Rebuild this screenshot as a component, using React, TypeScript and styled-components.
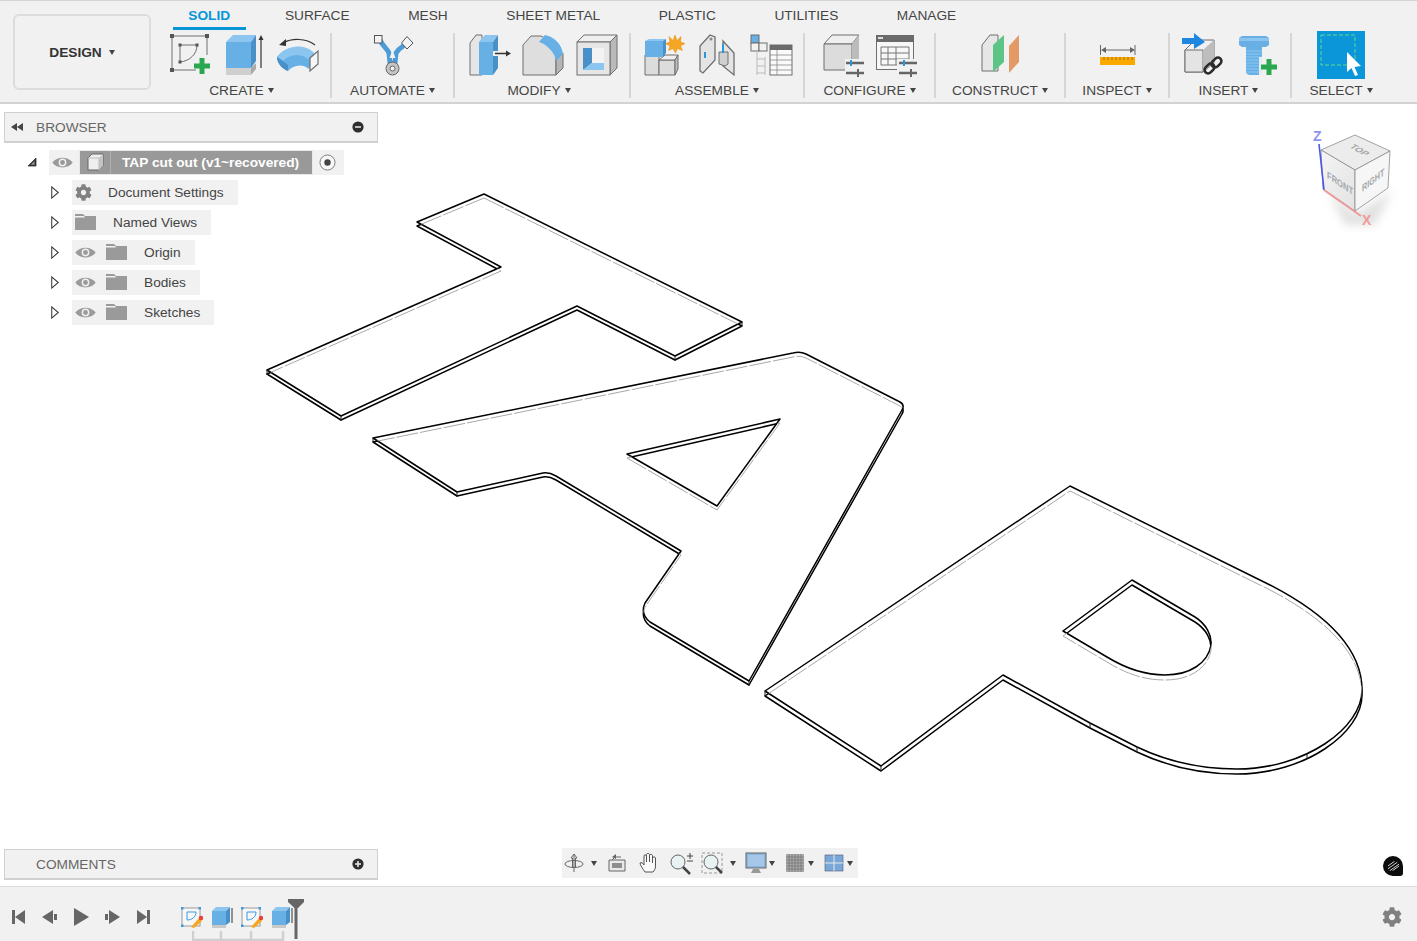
import React from "react";
import styled, { createGlobalStyle } from "styled-components";
import { FaCog } from "react-icons/fa";

const GlobalStyle = createGlobalStyle`
  html, body {
    margin: 0;
    padding: 0;
    background: #fff;
    font-family: "Liberation Sans", Arial, sans-serif;
  }
`;

const Page = styled.div`
  width: 1417px;
  height: 941px;
  display: flex;
  flex-direction: column;
  overflow: hidden;
  color: #444;
  font-size: 13.7px;
`;

/* ---------- toolbar ---------- */

const Toolbar = styled.div`
  height: 101px;
  flex: none;
  display: flex;
  background: #f1f1f1;
  border-top: 1px solid #d4d4d4;
  border-bottom: 2px solid #d2d2d2;
  padding-left: 13px;
`;

const DesignButton = styled.div`
  flex: none;
  width: 134px;
  height: 72px;
  margin: 13px 10px 0 0;
  border: 2px solid #dcdcdc;
  border-radius: 6px;
  display: flex;
  align-items: center;
  justify-content: center;
  gap: 7px;
  font-weight: 700;
  color: #333;
`;

const Caret = styled.span<{ $gap?: number }>`
  display: inline-block;
  flex: none;
  width: 0;
  height: 0;
  margin-left: ${(p) => p.$gap ?? 0}px;
  border-left: 3.5px solid transparent;
  border-right: 3.5px solid transparent;
  border-top: 5px solid #444;
`;

const ToolbarBody = styled.div`
  flex: 1;
  display: flex;
  flex-direction: column;
`;

const Tabs = styled.div`
  height: 29px;
  display: flex;
  margin-left: -2px;
`;

const Tab = styled.div<{ $active?: boolean }>`
  position: relative;
  padding: 0 ${(p) => (p.$active ? "25.5px" : "29.3px")} 0 29.3px;
  line-height: 29px;
  color: ${(p) => (p.$active ? "#0696d7" : "#444")};
  font-weight: ${(p) => (p.$active ? 700 : 400)};

  ${(p) =>
    p.$active &&
    `&::after {
      content: "";
      position: absolute;
      left: 14px;
      right: 10px;
      bottom: 0;
      height: 3px;
      background: #0696d7;
    }`}
`;

const Groups = styled.div`
  display: flex;
  margin-top: 3px;
`;

const Group = styled.div<{ $w: number; $last?: boolean; $pad?: number }>`
  width: ${(p) => p.$w}px;
  height: 65px;
  box-sizing: border-box;
  padding-right: ${(p) => p.$pad ?? 0}px;
  flex: none;
  display: flex;
  flex-direction: column;
  align-items: center;
  border-right: ${(p) => (p.$last ? "none" : "2px solid #d6d6d6")};
`;

const IconRow = styled.div`
  height: 44px;
  display: flex;
  align-items: center;
  gap: 6px;
`;

const GroupLabel = styled.div<{ $shift?: number }>`
  margin-top: 5px;
  margin-right: ${(p) => p.$shift ?? 0}px;
  line-height: 17px;
  display: flex;
  align-items: center;
  gap: 4px;
  white-space: nowrap;
`;

const ToolIcon = styled.svg`
  width: 48px;
  height: 44px;
  flex: none;
  overflow: visible;
`;

const SelectIcon = styled.svg`
  width: 48px;
  height: 48px;
  flex: none;
  margin-top: -1px;
`;

const blue = "#66b0e6";
const blueDark = "#4a90c8";
const blueLight = "#8cc6f0";
const grayLine = "#6e6e6e";
const green = "#2aa84f";

const GreenPlus = ({ x, y, r = 8 }: { x: number; y: number; r?: number }) => (
  <path d={`M${x - r} ${y}H${x + r}M${x} ${y - r}V${y + r}`} stroke={green} strokeWidth={r * 0.62} />
);

const SketchIcon = () => (
  <ToolIcon viewBox="0 0 48 44">
    <path d="M6 3H41M6 3V37H30M41 3V22" fill="none" stroke={grayLine} strokeWidth="1" />
    <path d="M14 29V12H31C31 21 24 28 14 29Z" fill="none" stroke={grayLine} strokeWidth="1" />
    <g fill="#555">
      <rect x="4" y="1" width="4" height="4" />
      <rect x="39" y="1" width="4" height="4" />
      <rect x="4" y="35" width="4" height="4" />
      <rect x="12.5" y="10.5" width="3" height="3" />
      <rect x="29.5" y="10.5" width="3" height="3" />
      <rect x="12.5" y="27.5" width="3" height="3" />
    </g>
    <GreenPlus x={36} y={33} />
  </ToolIcon>
);

const ExtrudeIcon = () => (
  <ToolIcon viewBox="0 0 48 44">
    <path d="M6 35H31V42H6Z" fill="#cfcfcf" />
    <path d="M31 35L36 30V36L31 42Z" fill="#a9a9a9" />
    <path d="M6 9H31V35H6Z" fill={blue} />
    <path d="M6 9L13 2H36L31 9Z" fill={blueLight} />
    <path d="M31 9L36 2V28L31 35Z" fill={blueDark} />
    <path d="M41 35V6" stroke="#333" strokeWidth="1.2" />
    <path d="M38.5 7L41 2L43.5 7Z" fill="#333" />
  </ToolIcon>
);

const RevolveIcon = () => (
  <ToolIcon viewBox="0 0 48 44">
    <path d="M41 12C32 5 18 5 9 10" fill="none" stroke="#333" strokeWidth="1.2" />
    <path d="M5 12L12 6V13Z" fill="#333" />
    <path d="M3 24C3 30 8 36 14 38C19 32 28 30 35 36L40 20C30 10 12 13 3 24Z" fill={blue} />
    <path d="M3 24C12 12 30 10 40 20L34 26C26 20 16 21 9 28Z" fill={blueLight} />
    <path d="M3 24L9 28L14 32V38C8 36 3 30 3 24Z" fill={blueDark} />
    <path d="M36 25L44 18V31L36 38Z" fill="#f6f6f6" stroke={grayLine} strokeWidth="1.2" />
  </ToolIcon>
);

const AutomateIcon = () => (
  <ToolIcon viewBox="0 0 48 44">
    <path d="M11 7C14 14 18 15 20 20L21 30H26L27 20C30 15 33 14 37 11" fill="none" stroke="#4d9cd8" strokeWidth="5" />
    <path d="M23.5 17L20.5 25H26.5Z" fill="#f1f1f1" />
    <rect x="5.5" y="2.5" width="7.5" height="7.5" fill="#f3f3f3" stroke="#555" />
    <path d="M38 3.5L44 10L38 16L32.5 10Z" fill="#f3f3f3" stroke="#555" />
    <circle cx="23.5" cy="35.5" r="6.5" fill="#c5c5c5" stroke="#666" />
    <circle cx="23.5" cy="35.5" r="2.5" fill="#f1f1f1" stroke="#666" />
  </ToolIcon>
);

const PressPullIcon = () => (
  <ToolIcon viewBox="0 0 48 44">
    <path d="M6 42V10L12 2H18V42Z" fill="#e6e6e6" stroke={grayLine} />
    <path d="M15 9L21 2H34L29 9Z" fill={blueLight} />
    <path d="M15 9H29V42H15Z" fill={blue} />
    <path d="M29 9L34 2V35L29 42Z" fill={blueDark} />
    <rect x="29" y="18" width="7" height="5" fill="#f1f1f1" />
    <path d="M31 20.5H43" stroke="#333" strokeWidth="1.5" />
    <path d="M42 17.5L47 20.5L42 23.5Z" fill="#333" />
  </ToolIcon>
);

const FilletIcon = () => (
  <ToolIcon viewBox="0 0 48 44">
    <path d="M5 42V12L13 3H23C34 8 38 15 38 30V42Z" fill="#dedede" stroke={grayLine} />
    <path d="M38 27L45 20V35L38 42Z" fill="#b5b5b5" stroke={grayLine} />
    <path d="M21 9L27 2C37 4 44 12 45 21L38 28C37 20 30 12 21 9Z" fill={blue} />
  </ToolIcon>
);

const ShellIcon = () => (
  <ToolIcon viewBox="0 0 48 44">
    <path d="M5 9L12 2H45L38 9Z" fill="#efefef" stroke={grayLine} />
    <path d="M38 9L45 2V35L38 42Z" fill="#b9b9b9" stroke={grayLine} />
    <rect x="5" y="9" width="33" height="33" fill="#e6e6e6" stroke={grayLine} />
    <rect x="11" y="15" width="21" height="22" fill="#f3f3f3" />
    <path d="M11 15H20V30L11 37Z" fill={blueDark} />
    <path d="M20 30H32V37H11Z" fill={blueLight} />
  </ToolIcon>
);

const NewComponentIcon = () => (
  <ToolIcon viewBox="0 0 48 44">
    <path d="M6 22H20V42H6Z" fill="#dcdcdc" stroke={grayLine} />
    <path d="M20 27H36V42H20Z" fill="#dcdcdc" stroke={grayLine} />
    <path d="M20 27L26 22H39L36 27Z" fill="#eee" stroke={grayLine} />
    <path d="M36 27L39 22V36L36 42Z" fill="#bdbdbd" stroke={grayLine} />
    <path d="M6 8H24V24H6Z" fill={blue} />
    <path d="M6 8L10 6H27L24 8Z" fill={blueLight} />
    <path d="M24 8L27 6V20L24 24Z" fill={blueDark} />
    <path
      d="M36 2L38 7.5L42 3.5L41.5 9L46 10.5L41.5 13L43.5 17.5L38.5 15.5L36.5 20L34 15.5L29.5 17.5L31 13L26.5 10.5L31 9L30 3.5L34 7.5Z"
      fill="#f5a623"
      stroke="#e08a00"
      strokeWidth=".5"
    />
  </ToolIcon>
);

const JointIcon = () => (
  <ToolIcon viewBox="0 0 48 44">
    <path d="M7 38V13L17 2L22 4V27L10 40Z" fill="#e4e4e4" stroke={grayLine} strokeWidth="1.3" />
    <path d="M30 8L41 20V42L30 33Z" fill="#e4e4e4" stroke={grayLine} strokeWidth="1.3" />
    <path d="M26 19H35V31L32 33L26 31Z" fill="#cfcfcf" stroke={grayLine} />
    <circle cx="18" cy="6" r="1.5" fill="#888" />
    <path d="M12 19V25M30 11V20" stroke="#2d95dc" strokeWidth="2" />
  </ToolIcon>
);

const TableTreeIcon = () => (
  <ToolIcon viewBox="0 0 48 44">
    <rect x="4" y="2" width="8" height="8" fill={blue} stroke={grayLine} />
    <rect x="4" y="10" width="8" height="8" fill="#f1f1f1" stroke={grayLine} />
    <rect x="12" y="10" width="8" height="8" fill="#f1f1f1" stroke={grayLine} />
    <path d="M10 18V42M18 24V42M10 26H18M10 33H18M10 40H18" stroke="#bbb" strokeWidth="1" fill="none" />
    <rect x="23" y="12" width="22" height="30" fill="#fafafa" stroke={grayLine} />
    <rect x="23" y="12" width="22" height="5" fill="#6a6a6a" />
    <path d="M23 22H45M23 27H45M23 32H45M23 37H45M30 17V42" stroke="#888" strokeWidth=".8" />
  </ToolIcon>
);

const Sliders = ({ x, y }: { x: number; y: number }) => (
  <g>
    <path d={`M${x} ${y}H${x + 18}M${x} ${y + 10}H${x + 18}`} stroke="#666" strokeWidth="2.4" />
    <path d={`M${x + 5} ${y - 3}V${y + 3}`} stroke="#2d95dc" strokeWidth="2" />
    <path d={`M${x + 12} ${y + 6}V${y + 14}`} stroke="#666" strokeWidth="2" />
  </g>
);

const ConfigureIcon = () => (
  <ToolIcon viewBox="0 0 48 44">
    <path d="M5 11L13 2H40L33 11Z" fill="#efefef" stroke={grayLine} />
    <path d="M5 11H33V37H5Z" fill="#dcdcdc" stroke={grayLine} />
    <path d="M33 11L40 2V29L33 37Z" fill="#bcbcbc" />
    <rect x="26" y="26" width="21" height="18" fill="#f1f1f1" />
    <Sliders x={27} y={30} />
  </ToolIcon>
);

const ParamTableIcon = () => (
  <ToolIcon viewBox="0 0 48 44">
    <rect x="3.5" y="2.5" width="37" height="34" fill="#f7f7f7" stroke={grayLine} />
    <rect x="3" y="2" width="38" height="7" fill="#6a6a6a" />
    <rect x="5" y="4" width="5" height="2" fill="#ddd" />
    <path d="M8 14H36V32H8ZM8 20H36M8 26H36M15 14V32M23 14V32" fill="none" stroke="#777" />
    <rect x="24" y="26" width="23" height="18" fill="#f1f1f1" />
    <Sliders x={26} y={30} />
  </ToolIcon>
);

const ConstructIcon = () => (
  <ToolIcon viewBox="0 0 48 44">
    <path d="M6 38V12L14 2H22V38Z" fill="#e6e6e6" stroke={grayLine} />
    <path d="M17 39V12L28 2V29Z" fill="#5cc585" />
    <path d="M33 40V13L43 2V29Z" fill="#e49a66" />
  </ToolIcon>
);

const InspectIcon = () => (
  <ToolIcon viewBox="0 0 48 44">
    <path d="M7.5 12V22M42 12V22" stroke="#666" />
    <path d="M10 17H40" stroke="#666" />
    <path d="M13 14L8 17L13 20ZM37 14L42 17L37 20Z" fill="#666" />
    <rect x="7" y="24" width="35" height="8" fill="#f9a900" />
    <path d="M11 24V27M15 24V27M19 24V27M23 24V27M27 24V27M31 24V27M35 24V27M39 24V27" stroke="#a87200" />
  </ToolIcon>
);

const DeriveIcon = () => (
  <ToolIcon viewBox="0 0 48 44">
    <path d="M6 17L16 7H35V30L24 39H6Z" fill="#f1f1f1" stroke={grayLine} />
    <path d="M6 17H24V39H6Z" fill="#e4e4e4" stroke={grayLine} />
    <path d="M24 17L35 7V30L24 39Z" fill="#bdbdbd" />
    <path d="M3 5H15V0L26 9L15 16V11H3Z" fill="#1e88e0" />
    <g fill="none" stroke="#2b2b2b" strokeWidth="2.6">
      <rect x="25" y="32" width="11" height="7" rx="3.5" transform="rotate(-45 30.5 35.5)" />
      <rect x="32" y="26" width="11" height="7" rx="3.5" transform="rotate(-45 37.5 29.5)" />
    </g>
  </ToolIcon>
);

const BoltIcon = () => (
  <ToolIcon viewBox="0 0 48 44">
    <path d="M6 5L9 3H33L36 5V12L33 14H9L6 12Z" fill="#6aaee6" />
    <path d="M6 5H36V8H6Z" fill={blueLight} />
    <path d="M13 14H29V40L26 42H16L13 40Z" fill={blue} />
    <path
      d="M13 18H29M13 21H29M13 24H29M13 27H29M13 30H29M13 33H29M13 36H29M13 39H29"
      stroke={blueLight}
    />
    <rect x="26" y="24" width="19" height="19" fill="#f1f1f1" opacity=".9" />
    <GreenPlus x={36} y={34} />
  </ToolIcon>
);

const SelectToolIcon = () => (
  <SelectIcon viewBox="0 0 48 48">
    <rect width="48" height="48" fill="#0a96d8" />
    <rect x="4" y="4" width="34" height="30" fill="none" stroke="#5fdc8c" strokeWidth="1" strokeDasharray="4 2" />
    <path d="M30 21L44 35L37.5 36L41 44L38 45L34.5 37L30 41Z" fill="#fff" />
  </SelectIcon>
);

/* ---------- canvas ---------- */

const Canvas = styled.div`
  flex: 1;
  position: relative;
  background: #fff;
`;

const Drawing = styled.svg`
  position: absolute;
  inset: 0;
  width: 1417px;
  height: 782px;
`;

const letters = [
  {
    id: "t",
    d: "M484 194L742 322L675 356L577 306L341 416L267 370L501 267L417 222Z",
    drop: 4,
  },
  {
    id: "a",
    d: "M373 438L793 353Q800 351 806 354L900 402Q905 405 902 410L749 681L650 622Q640 614 645 603L681 551L556 476Q549 472 543 473L457 492ZM627 454L717 506L780 419Z",
    drop: 4,
  },
  {
    id: "p",
    d: "M1070 486L1270 585C1328 615 1362 650 1362 690C1362 728 1305 769 1237 769C1195 769 1160 758 1137 747L1090 723L1003 675L881 766L765 691ZM1132 580L1195 617C1206 624 1212 635 1211 645C1208 663 1190 675 1165 675C1143 675 1125 668 1107 657L1063 631Z",
    drop: 5,
  },
];

const TapModel = () => (
  <Drawing viewBox="0 104 1417 782">
    <defs>
      {letters.map((l) => (
        <clipPath id={`clip-${l.id}`} key={l.id}>
          <path d={l.d} clipRule="evenodd" />
        </clipPath>
      ))}
    </defs>
    {letters.map((l) => (
      <g key={l.id}>
        <path
          d={l.d}
          transform={`translate(0 ${l.drop})`}
          fill="none"
          stroke="#000"
          strokeWidth="1.5"
          strokeLinejoin="round"
        />
        <path d={l.d} fillRule="evenodd" fill="#fff" stroke="#000" strokeWidth="1.5" strokeLinejoin="round" />
        <g clipPath={`url(#clip-${l.id})`}>
          <path
            d={l.d}
            transform={`translate(0 ${l.drop})`}
            fill="none"
            stroke="#a8a8a8"
            strokeWidth="1"
            strokeDasharray="22 2"
          />
        </g>
      </g>
    ))}
    <path
      d="M267 370V375M341 416V421M675 356V361M742 322V326M373 438V442M457 492V497M749 681V686M881 766V771M765 691V696M1090 723V728M1137 747V752M1307 754V759"
      stroke="#222"
      strokeWidth="1"
    />
  </Drawing>
);

const CubeBox = styled.svg`
  position: absolute;
  top: 21px;
  right: 7px;
  width: 110px;
  height: 110px;
`;

const cubeText = {
  fontFamily: '"Liberation Sans", Arial, sans-serif',
  fontWeight: 700,
  fill: "#a4a7aa",
} as const;

const ViewCube = () => (
  <CubeBox viewBox="1300 125 110 110">
    <defs>
      <filter id="cube-shadow" x="-30%" y="-30%" width="160%" height="160%">
        <feGaussianBlur stdDeviation="5" />
      </filter>
      <linearGradient id="cube-left" x1="0" y1="0" x2="1" y2="1">
        <stop offset="0" stopColor="#f4f4f4" />
        <stop offset="1" stopColor="#e3e3e3" />
      </linearGradient>
    </defs>
    <path d="M1328 190L1356 214L1392 190L1375 225L1345 225Z" fill="#bbb" opacity=".45" filter="url(#cube-shadow)" />
    <path d="M1355 135L1390 151L1355 170L1321 150Z" fill="#ececec" stroke="#8b8b8b" strokeWidth=".8" />
    <path d="M1321 150L1355 170V211L1323 189Z" fill="url(#cube-left)" stroke="#8b8b8b" strokeWidth=".8" />
    <path d="M1355 170L1390 151L1388 188L1355 211Z" fill="#f6f6f6" stroke="#8b8b8b" strokeWidth=".8" />
    <text {...cubeText} fontSize="10" transform="matrix(.78 .45 -.78 .45 1349 147)">TOP</text>
    <text {...cubeText} fontSize="10" transform="matrix(.76 .5 0 1 1327 178)">FRONT</text>
    <text {...cubeText} fontSize="10" transform="matrix(.72 -.55 0 1 1362 192)">RIGHT</text>
    <path d="M1319 144L1324 190" stroke="#4a55e8" strokeWidth="1.6" />
    <path d="M1324 190L1361 216" stroke="#ef9a9a" strokeWidth="2" />
    <text x="1313" y="141" fontSize="14" fontWeight="700" fill="#8f94f0" fontFamily='"Liberation Sans", sans-serif'>Z</text>
    <text x="1362" y="225" fontSize="14" fontWeight="700" fill="#f09a9a" fontFamily='"Liberation Sans", sans-serif'>X</text>
  </CubeBox>
);

/* ---------- browser ---------- */

const SidePanel = styled.div`
  position: absolute;
  left: 4px;
  top: 8px;
  width: 374px;
`;

const CommentsPanel = styled.div`
  position: absolute;
  left: 4px;
  bottom: 6px;
  width: 374px;
`;

const PanelHeader = styled.div`
  height: 31px;
  box-sizing: border-box;
  background: #f1f1f1;
  border: 1px solid #d0d0d0;
  border-bottom-width: 2px;
  display: flex;
  align-items: center;
  padding-left: 5px;
  padding-right: 13px;
  color: #666;
`;

const PanelTitle = styled.span<{ $indent: number }>`
  flex: 1;
  margin-left: ${(p) => p.$indent}px;
`;

const MiniSvg = styled.svg<{ $w?: number; $h?: number }>`
  width: ${(p) => p.$w ?? 14}px;
  height: ${(p) => p.$h ?? 14}px;
  flex: none;
`;

const RoundGlyph = ({ plus }: { plus?: boolean }) => (
  <MiniSvg viewBox="0 0 12 12" $w={12} $h={12}>
    <circle cx="6" cy="6" r="5.6" fill="#2e2e2e" />
    <path d={plus ? "M3 6H9M6 3V9" : "M3 6H9"} stroke="#eee" strokeWidth="1.5" />
  </MiniSvg>
);

const Tree = styled.div`
  margin-top: 4px;
`;

const Row = styled.div<{ $indent: number }>`
  height: 30px;
  display: flex;
  align-items: center;
  padding-left: ${(p) => p.$indent}px;
`;

const Toggle = styled.div`
  width: 24px;
  box-sizing: border-box;
  flex: none;
  display: flex;
  padding-left: 1.5px;
`;

const Chip = styled.div`
  height: 25px;
  display: flex;
  align-items: center;
  background: #f1f1f1;
`;

const IconCell = styled.div<{ $w: number }>`
  width: ${(p) => p.$w}px;
  height: 100%;
  flex: none;
  display: flex;
  align-items: center;
  justify-content: center;
  box-sizing: border-box;
`;

const RootEyeCell = styled(IconCell)`
  padding-right: 5px;
`;

const RadioCell = styled(IconCell)`
  padding-right: 2px;
`;

const Selected = styled.div`
  width: 232px;
  height: 23px;
  display: flex;
  align-items: center;
  background: #999;
  color: #fff;
  font-weight: 700;
  box-shadow: 0 0 0 1px #e8e8e8;
`;

const CubeCell = styled(IconCell)`
  border-right: 1px solid #b0b0b0;
`;

const Label = styled.span<{ $pad: number }>`
  padding: 0 14px 0 ${(p) => p.$pad}px;
  white-space: nowrap;
`;

const SelectedLabel = styled.span`
  padding-left: 11px;
  white-space: nowrap;
`;

const Eye = () => (
  <MiniSvg viewBox="0 0 22 14" $w={21} $h={13}>
    <path d="M0 7C5 0 17 0 22 7C17 14 5 14 0 7Z" fill="#9a9a9a" />
    <circle cx="11" cy="7" r="4.2" fill="#efefef" />
    <circle cx="11" cy="7" r="2.6" fill="#9a9a9a" />
  </MiniSvg>
);

const Folder = () => (
  <MiniSvg viewBox="0 0 21 16" $w={21} $h={16}>
    <path d="M0 0H8L10 2H21V16H0Z" fill="#9a9a9a" />
    <path d="M0 2H9L10 3.5H0Z" fill="#f1f1f1" />
  </MiniSvg>
);

const Expand = () => (
  <MiniSvg viewBox="0 0 10 14" $w={10} $h={13}>
    <path d="M1.5 1L8.5 7L1.5 13Z" fill="#fff" stroke="#333" strokeWidth="1.1" />
  </MiniSvg>
);

const Collapse = () => (
  <MiniSvg viewBox="0 0 10 10" $w={10} $h={10}>
    <path d="M9 1V9H1Z" fill="#333" stroke="#333" strokeWidth=".8" />
    <path d="M7.5 4V7.7H3.8Z" fill="#9b9b9b" />
  </MiniSvg>
);

const Radio = () => (
  <MiniSvg viewBox="0 0 18 18" $w={17} $h={17}>
    <circle cx="9" cy="9" r="8" fill="#f8f8f8" stroke="#777" />
    <circle cx="9" cy="9" r="3.4" fill="#444" />
  </MiniSvg>
);

const ComponentCube = () => (
  <MiniSvg viewBox="0 0 18 18" $w={18} $h={18}>
    <path d="M2 5L6 1H17V13L13 17H2Z" fill="#eee" stroke="#666" strokeLinejoin="round" />
    <path d="M13 5L17 1V13L13 17Z" fill="#c4c4c4" />
    <path d="M2 5H13V17" fill="none" stroke="#bbb" />
  </MiniSvg>
);

const Gear = styled(FaCog)`
  color: #808080;
  font-size: 17px;
`;

const TimelineGear = styled(FaCog)`
  color: #808080;
  font-size: 20px;
  margin-left: auto;
`;

const items: { name: string; eye?: boolean; icon: "gear" | "folder"; cell: number; pad: number }[] = [
  { name: "Document Settings", icon: "gear", cell: 22, pad: 14 },
  { name: "Named Views", icon: "folder", cell: 26, pad: 15 },
  { name: "Origin", eye: true, icon: "folder", cell: 36, pad: 10 },
  { name: "Bodies", eye: true, icon: "folder", cell: 36, pad: 10 },
  { name: "Sketches", eye: true, icon: "folder", cell: 36, pad: 10 },
];

/* ---------- navigation bar ---------- */

const NavBar = styled.div`
  position: absolute;
  left: 562px;
  bottom: 8px;
  width: 296px;
  height: 30px;
  background: #f1f1f1;
  display: flex;
  align-items: center;
  gap: 8px;
`;

const NavItem = styled.div`
  display: flex;
  align-items: center;
`;

const NavIcon = styled.svg`
  width: 24px;
  height: 24px;
  flex: none;
`;

const Badge = styled.div`
  position: absolute;
  left: 1383px;
  bottom: 10px;
  width: 20px;
  height: 20px;
  border-radius: 50%;
  border-bottom-right-radius: 3px;
  background: #0c0c0c;
  display: flex;
  align-items: center;
  justify-content: center;
`;

/* ---------- timeline ---------- */

const Timeline = styled.div`
  height: 49px;
  flex: none;
  background: #f1f1f1;
  border-top: 1px solid #dcdcdc;
  padding: 5px 15px 0 9px;
  display: flex;
  align-items: center;
`;

const Controls = styled.div`
  display: flex;
  align-items: center;
  gap: 11px;
`;

const ControlIcon = styled.svg`
  width: 20px;
  height: 20px;
  fill: #666;
`;

const Steps = styled.div`
  position: relative;
  margin-left: 26px;
  display: flex;
  gap: 6px;
`;

const StepIcon = styled.svg`
  width: 24px;
  height: 24px;
`;

const Bracket = styled.svg`
  position: absolute;
  left: 13px;
  top: 26px;
  width: 94px;
  height: 12px;
`;

const Marker = styled.svg`
  position: absolute;
  left: 109px;
  top: -6px;
  width: 16px;
  height: 40px;
`;

const SketchStep = () => (
  <StepIcon viewBox="0 0 24 24">
    <rect x="3" y="3" width="18" height="18" fill="#f7f7f7" stroke="#9a9a9a" />
    <g fill="#3b99e0">
      <rect x="2" y="2" width="2.5" height="2.5" />
      <rect x="19.5" y="2" width="2.5" height="2.5" />
      <rect x="2" y="19.5" width="2.5" height="2.5" />
    </g>
    <path d="M8 15V7H17C17 12 13 15 8 15Z" fill="none" stroke="#3b99e0" />
    <path d="M12 22L20 13L23 16L15 23Z" fill="#f5a623" />
    <circle cx="22" cy="13" r="2.2" fill="#e8403a" />
  </StepIcon>
);

const ExtrudeStep = () => (
  <StepIcon viewBox="0 0 24 24">
    <path d="M3 20H17V23H3Z" fill="#c9c9c9" />
    <path d="M3 6H17V20H3Z" fill={blue} />
    <path d="M3 6L7 2H21L17 6Z" fill={blueLight} />
    <path d="M17 6L21 2V17L17 20Z" fill={blueDark} />
    <path d="M23 18V3" stroke="#333" />
  </StepIcon>
);

const App: React.FC = () => (
  <Page>
    <GlobalStyle />
    <Toolbar>
      <DesignButton>
        DESIGN <Caret />
      </DesignButton>
      <ToolbarBody>
        <Tabs>
          <Tab $active>SOLID</Tab>
          <Tab>SURFACE</Tab>
          <Tab>MESH</Tab>
          <Tab>SHEET METAL</Tab>
          <Tab>PLASTIC</Tab>
          <Tab>UTILITIES</Tab>
          <Tab>MANAGE</Tab>
        </Tabs>
        <Groups>
          <Group $w={171} $pad={4}>
            <IconRow>
              <SketchIcon />
              <ExtrudeIcon />
              <RevolveIcon />
            </IconRow>
            <GroupLabel $shift={4}>
              CREATE <Caret />
            </GroupLabel>
          </Group>
          <Group $w={123}>
            <IconRow>
              <AutomateIcon />
            </IconRow>
            <GroupLabel>
              AUTOMATE <Caret />
            </GroupLabel>
          </Group>
          <Group $w={176}>
            <IconRow>
              <PressPullIcon />
              <FilletIcon />
              <ShellIcon />
            </IconRow>
            <GroupLabel $shift={6}>
              MODIFY <Caret />
            </GroupLabel>
          </Group>
          <Group $w={174}>
            <IconRow>
              <NewComponentIcon />
              <JointIcon />
              <TableTreeIcon />
            </IconRow>
            <GroupLabel>
              ASSEMBLE <Caret />
            </GroupLabel>
          </Group>
          <Group $w={131}>
            <IconRow>
              <ConfigureIcon />
              <ParamTableIcon />
            </IconRow>
            <GroupLabel>
              CONFIGURE <Caret />
            </GroupLabel>
          </Group>
          <Group $w={130}>
            <IconRow>
              <ConstructIcon />
            </IconRow>
            <GroupLabel>
              CONSTRUCT <Caret />
            </GroupLabel>
          </Group>
          <Group $w={104}>
            <IconRow>
              <InspectIcon />
            </IconRow>
            <GroupLabel>
              INSPECT <Caret />
            </GroupLabel>
          </Group>
          <Group $w={122}>
            <IconRow>
              <DeriveIcon />
              <BoltIcon />
            </IconRow>
            <GroupLabel $shift={3}>
              INSERT <Caret />
            </GroupLabel>
          </Group>
          <Group $w={98} $last>
            <IconRow>
              <SelectToolIcon />
            </IconRow>
            <GroupLabel>
              SELECT <Caret />
            </GroupLabel>
          </Group>
        </Groups>
      </ToolbarBody>
    </Toolbar>

    <Canvas>
      <TapModel />
      <ViewCube />

      <SidePanel>
        <PanelHeader>
          <MiniSvg viewBox="0 0 14 10" $w={14} $h={10}>
            <path d="M7 1L1 5L7 9ZM13 1L7 5L13 9Z" fill="#444" />
          </MiniSvg>
          <PanelTitle $indent={12}>BROWSER</PanelTitle>
          <RoundGlyph />
        </PanelHeader>
        <Tree>
          <Row $indent={21}>
            <Toggle>
              <Collapse />
            </Toggle>
            <Chip>
              <RootEyeCell $w={31}>
                <Eye />
              </RootEyeCell>
              <Selected>
                <CubeCell $w={31}>
                  <ComponentCube />
                </CubeCell>
                <SelectedLabel>TAP cut out (v1~recovered)</SelectedLabel>
              </Selected>
              <RadioCell $w={32}>
                <Radio />
              </RadioCell>
            </Chip>
          </Row>
          {items.map((item) => (
            <Row $indent={44} key={item.name}>
              <Toggle>
                <Expand />
              </Toggle>
              <Chip>
                {item.eye && (
                  <IconCell $w={26}>
                    <Eye />
                  </IconCell>
                )}
                <IconCell $w={item.cell}>{item.icon === "gear" ? <Gear /> : <Folder />}</IconCell>
                <Label $pad={item.pad}>{item.name}</Label>
              </Chip>
            </Row>
          ))}
        </Tree>
      </SidePanel>

      <CommentsPanel>
        <PanelHeader>
          <PanelTitle $indent={26}>COMMENTS</PanelTitle>
          <RoundGlyph plus />
        </PanelHeader>
      </CommentsPanel>

      <NavBar>
        <NavItem>
          <NavIcon viewBox="0 0 24 24" fill="none" stroke="#666">
            <path d="M12 3V21M12 3L9 7H10.5V17M12 3L15 7H13.5V17" />
            <ellipse cx="12" cy="13" rx="9" ry="3.5" />
          </NavIcon>
          <Caret $gap={5} />
        </NavItem>
        <NavItem>
          <NavIcon viewBox="0 0 24 24">
            <path d="M4 9H20V20H4Z" fill="#e9e9e9" stroke="#666" />
            <path d="M7 12H17V17H7Z" fill="#8e8e8e" />
            <path d="M7 9L10 6H16" fill="none" stroke="#666" />
            <path d="M7 6L11 3V8Z" fill="#666" />
          </NavIcon>
        </NavItem>
        <NavItem>
          <NavIcon viewBox="0 0 24 24">
            <path
              d="M8 21C6 18 3 14 3 12C4 11 6 12 7 14V5C7 3.5 9 3.5 9.5 5V11V3.5C10 2 12 2 12.5 3.5V11V4.5C13 3 15 3 15.5 4.5V12V7C16 5.5 18 5.5 18.5 7V15C18.5 18 17 20 16 21Z"
              fill="#fafafa"
              stroke="#555"
            />
          </NavIcon>
        </NavItem>
        <NavItem>
          <NavIcon viewBox="0 0 24 24">
            <circle cx="9" cy="11" r="7" fill="#e8f2f2" stroke="#666" />
            <path d="M14 16L21 23" stroke="#444" strokeWidth="2.5" />
            <path d="M18 5H24M21 2V8M18 10H24" stroke="#444" strokeWidth="1" />
          </NavIcon>
        </NavItem>
        <NavItem>
          <NavIcon viewBox="0 0 24 24">
            <rect x="1" y="2" width="20" height="20" fill="none" stroke="#999" strokeDasharray="3 2" />
            <circle cx="10" cy="11" r="7" fill="#e8f2f2" stroke="#666" />
            <path d="M15 16L21 22" stroke="#444" strokeWidth="2.5" />
          </NavIcon>
          <Caret $gap={5} />
        </NavItem>
        <NavItem>
          <NavIcon viewBox="0 0 24 24">
            <rect x="2" y="2" width="20" height="15" fill="#8db8de" stroke="#666" />
            <rect x="4" y="4" width="16" height="11" fill="#a5c8e8" />
            <path d="M9 18H15L17 22H7Z" fill="#999" />
          </NavIcon>
          <Caret $gap={1} />
        </NavItem>
        <NavItem>
          <NavIcon viewBox="0 0 24 24">
            <rect x="3" y="3" width="18" height="18" fill="#aaa" />
            <path
              d="M6 3V21M9 3V21M12 3V21M15 3V21M18 3V21M3 6H21M3 9H21M3 12H21M3 15H21M3 18H21"
              stroke="#777"
              strokeWidth=".8"
            />
          </NavIcon>
          <Caret $gap={1} />
        </NavItem>
        <NavItem>
          <NavIcon viewBox="0 0 24 24">
            <rect x="3" y="4" width="18" height="16" fill="#79a8d8" stroke="#557" strokeWidth=".6" />
            <path d="M12 4V20M3 12H21" stroke="#e8e8e8" />
          </NavIcon>
          <Caret $gap={1} />
        </NavItem>
      </NavBar>

      <Badge>
        <MiniSvg viewBox="0 0 14 10" $w={13} $h={10}>
          <path d="M1 8L11 1M3 10L13 3M1 5L8 0M6 10L13 5" stroke="#ddd" strokeWidth="1" />
        </MiniSvg>
      </Badge>
    </Canvas>

    <Timeline>
      <Controls>
        <ControlIcon viewBox="0 0 20 20">
          <path d="M3 3H6V17H3ZM6 10L16 3V17Z" />
        </ControlIcon>
        <ControlIcon viewBox="0 0 20 20">
          <path d="M2 10L13 3V17ZM14 7H17V13H14Z" />
        </ControlIcon>
        <ControlIcon viewBox="0 0 20 20">
          <path d="M3 1L18 10L3 19Z" />
        </ControlIcon>
        <ControlIcon viewBox="0 0 20 20">
          <path d="M18 10L7 3V17ZM3 7H6V13H3Z" />
        </ControlIcon>
        <ControlIcon viewBox="0 0 20 20">
          <path d="M14 3H17V17H14ZM14 10L4 3V17Z" />
        </ControlIcon>
      </Controls>
      <Steps>
        <SketchStep />
        <ExtrudeStep />
        <SketchStep />
        <ExtrudeStep />
        <Bracket viewBox="0 0 94 12">
          <path d="M1 0V9H91V0M29 0V9M59 0V9" fill="none" stroke="#cfcfcf" strokeWidth="2.4" />
        </Bracket>
        <Marker viewBox="0 0 16 40">
          <path d="M0 0H16V3L10 9H6.5L0 3Z" fill="#666" />
          <rect x="6.5" y="8" width="3" height="32" fill="#666" />
        </Marker>
      </Steps>
      <TimelineGear />
    </Timeline>
  </Page>
);

export default App;
